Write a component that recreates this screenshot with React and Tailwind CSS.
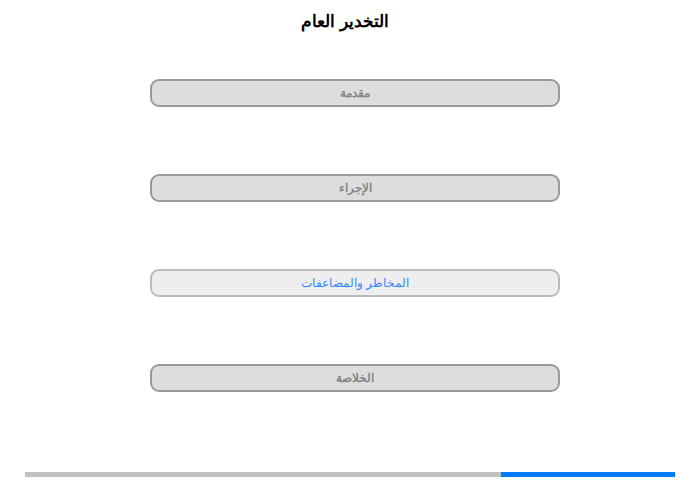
export default function App() {
  const items = [
    { t: "مقدمة", active: false },
    { t: "الإجراء", active: false },
    { t: "المخاطر والمضاعفات", active: true },
    { t: "الخلاصة", active: false },
  ];
  return (
    <div dir="rtl" className="w-[700px] h-[480px] bg-white flex flex-col" style={{ fontFamily: '"Liberation Sans", Arial, sans-serif' }}>
      <div className="h-[79px] pt-[11px] pr-[10px] text-center text-[17px] font-bold text-black leading-[22px]">التخدير العام</div>
      <div className="flex flex-col gap-[67px]">
        {items.map((it, i) => (
          <div key={i} dir="ltr" className="pl-[150px]">
            <div
              dir="rtl"
              className={
                it.active
                  ? "w-[410px] h-[28px] rounded-[9px] border-2 border-[#bbbbbb] bg-[#eeeeee] flex items-center justify-center text-[12px] text-[#3388ff]"
                  : "w-[410px] h-[28px] rounded-[9px] border-2 border-[#999999] bg-[#dddddd] flex items-center justify-center text-[12px] font-bold text-[#888888]"
              }
            >
              {it.t}
            </div>
          </div>
        ))}
      </div>
      <div dir="ltr" className="mt-[80px] pl-[25px] flex">
        <div className="w-[476px] h-[5px] bg-[#c0c0c0]"></div>
        <div className="w-[174px] h-[5px] bg-[#007bff]"></div>
      </div>
    </div>
  );
}
